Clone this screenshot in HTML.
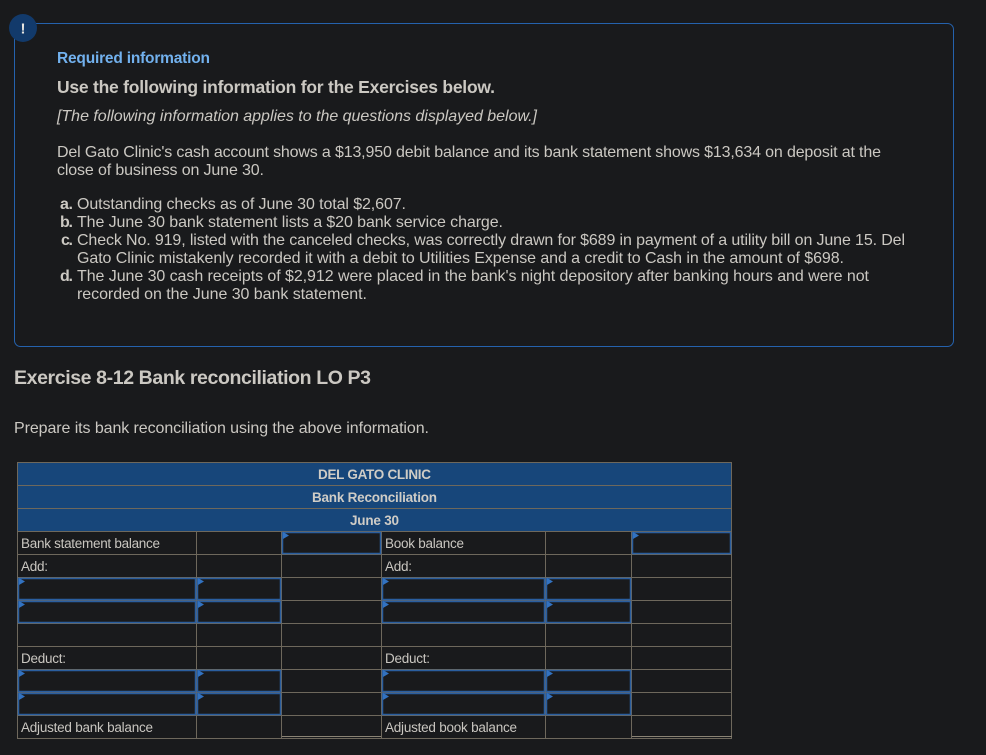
<!DOCTYPE html>
<html lang="en">
<head>
<meta charset="utf-8">
<title>Exercise 8-12 Bank reconciliation</title>
<style>
html,body{margin:0;padding:0;background:#191a1c;width:986px;height:755px;overflow:hidden}
svg{display:block;position:absolute;left:0;top:0}
.b{font:16px "Liberation Sans",Arial,sans-serif;fill:#cbc8c2}
.s{font-weight:700}
.i{font-style:italic}
.t{font:13.5px "Liberation Sans",Arial,sans-serif;fill:#c9c6c0}
.h{font:bold 13.5px "Liberation Sans",Arial,sans-serif;fill:#cfccc6}
</style>
</head>
<body>
<svg width="986" height="755" viewBox="0 0 986 755" xmlns="http://www.w3.org/2000/svg">
<rect width="986" height="755" fill="#191a1c"/>
<rect x="14.500" y="23.500" width="939" height="323" rx="6" fill="none" stroke="#2562ad" stroke-width="1"/>
<circle cx="23" cy="28" r="14" fill="#123a6b"/>
<text x="23" y="33.500" text-anchor="middle" font-family="Liberation Sans, Arial, sans-serif" font-weight="700" font-size="15" fill="#e8e6e1">!</text>

<text class="b s" x="57" y="63" textLength="153" style="fill:#72b1ee;font-size:15.500px">Required information</text>
<text class="b s" x="57" y="93" textLength="438" style="font-size:17.500px">Use the following information for the Exercises below.</text>
<text class="b i" x="57" y="121" textLength="480">[The following information applies to the questions displayed below.]</text>
<text class="b" x="57" y="157" textLength="824">Del Gato Clinic's cash account shows a $13,950 debit balance and its bank statement shows $13,634 on deposit at the</text>
<text class="b" x="57" y="175" textLength="207">close of business on June 30.</text>

<text class="b s" x="60" y="209" textLength="13">a.</text>
<text class="b" x="77" y="209" textLength="329">Outstanding checks as of June 30 total $2,607.</text>
<text class="b s" x="60" y="227" textLength="13">b.</text>
<text class="b" x="77" y="227" textLength="426">The June 30 bank statement lists a $20 bank service charge.</text>
<text class="b s" x="61" y="245" textLength="12">c.</text>
<text class="b" x="77" y="245" textLength="828">Check No. 919, listed with the canceled checks, was correctly drawn for $689 in payment of a utility bill on June 15. Del</text>
<text class="b" x="77" y="263" textLength="767">Gato Clinic mistakenly recorded it with a debit to Utilities Expense and a credit to Cash in the amount of $698.</text>
<text class="b s" x="60" y="281" textLength="13">d.</text>
<text class="b" x="77" y="281" textLength="792">The June 30 cash receipts of $2,912 were placed in the bank's night depository after banking hours and were not</text>
<text class="b" x="77" y="299" textLength="290">recorded on the June 30 bank statement.</text>

<text class="b s" x="14" y="384" textLength="357" style="font-size:19.500px">Exercise 8-12 Bank reconciliation LO P3</text>
<text class="b" x="14" y="433" textLength="415">Prepare its bank reconciliation using the above information.</text>

<!-- table header -->
<rect x="17" y="462" width="715" height="69" fill="#17467a"/>
<g stroke="#6e685c" stroke-width="1" fill="none">
<rect x="17.500" y="462.500" width="714" height="276"/>
<path d="M17 485.500H732M17 508.500H732M17 531.500H732M17 554.500H732M17 577.500H732M17 600.500H732M17 623.500H732M17 646.500H732M17 669.500H732M17 692.500H732M17 715.500H732"/>
<path d="M196.500 531V739M281.500 531V739M381.500 531V739M545.500 531V739M631.500 531V739"/>
<path d="M282 736.500H381M632 736.500H732" stroke="#8a8374"/>
</g>

<!-- input cells -->
<g fill="none" stroke="#2a5e9f" stroke-width="1.500">
<rect x="282.500" y="532.500" width="98" height="21"/>
<rect x="632.500" y="532.500" width="98" height="21"/>
<rect x="18.500" y="578.500" width="177" height="21"/><rect x="197.500" y="578.500" width="83" height="21"/><rect x="382.500" y="578.500" width="162" height="21"/><rect x="546.500" y="578.500" width="84" height="21"/>
<rect x="18.500" y="601.500" width="177" height="21"/><rect x="197.500" y="601.500" width="83" height="21"/><rect x="382.500" y="601.500" width="162" height="21"/><rect x="546.500" y="601.500" width="84" height="21"/>
<rect x="18.500" y="670.500" width="177" height="21"/><rect x="197.500" y="670.500" width="83" height="21"/><rect x="382.500" y="670.500" width="162" height="21"/><rect x="546.500" y="670.500" width="84" height="21"/>
<rect x="18.500" y="693.500" width="177" height="21"/><rect x="197.500" y="693.500" width="83" height="21"/><rect x="382.500" y="693.500" width="162" height="21"/><rect x="546.500" y="693.500" width="84" height="21"/>
</g>
<g fill="#3272c0">
<path d="M283 532l6 3.500-6 3.500zM633 532l6 3.500-6 3.500z"/>
<path d="M19 578l6 3.500-6 3.500zM198 578l6 3.500-6 3.500zM383 578l6 3.500-6 3.500zM547 578l6 3.500-6 3.500z"/>
<path d="M19 601l6 3.500-6 3.500zM198 601l6 3.500-6 3.500zM383 601l6 3.500-6 3.500zM547 601l6 3.500-6 3.500z"/>
<path d="M19 670l6 3.500-6 3.500zM198 670l6 3.500-6 3.500zM383 670l6 3.500-6 3.500zM547 670l6 3.500-6 3.500z"/>
<path d="M19 693l6 3.500-6 3.500zM198 693l6 3.500-6 3.500zM383 693l6 3.500-6 3.500zM547 693l6 3.500-6 3.500z"/>
</g>

<!-- table text -->
<text class="h" x="318" y="479" textLength="113">DEL GATO CLINIC</text>
<text class="h" x="312" y="502" textLength="125">Bank Reconciliation</text>
<text class="h" x="350" y="525" textLength="49">June 30</text>
<text class="t" x="21" y="548" textLength="139">Bank statement balance</text>
<text class="t" x="385" y="548" textLength="79">Book balance</text>
<text class="t" x="21" y="571" textLength="27">Add:</text>
<text class="t" x="385" y="571" textLength="27">Add:</text>
<text class="t" x="21" y="663" textLength="45">Deduct:</text>
<text class="t" x="385" y="663" textLength="45">Deduct:</text>
<text class="t" x="21" y="732" textLength="132">Adjusted bank balance</text>
<text class="t" x="385" y="732" textLength="132">Adjusted book balance</text>
</svg>
</body>
</html>
